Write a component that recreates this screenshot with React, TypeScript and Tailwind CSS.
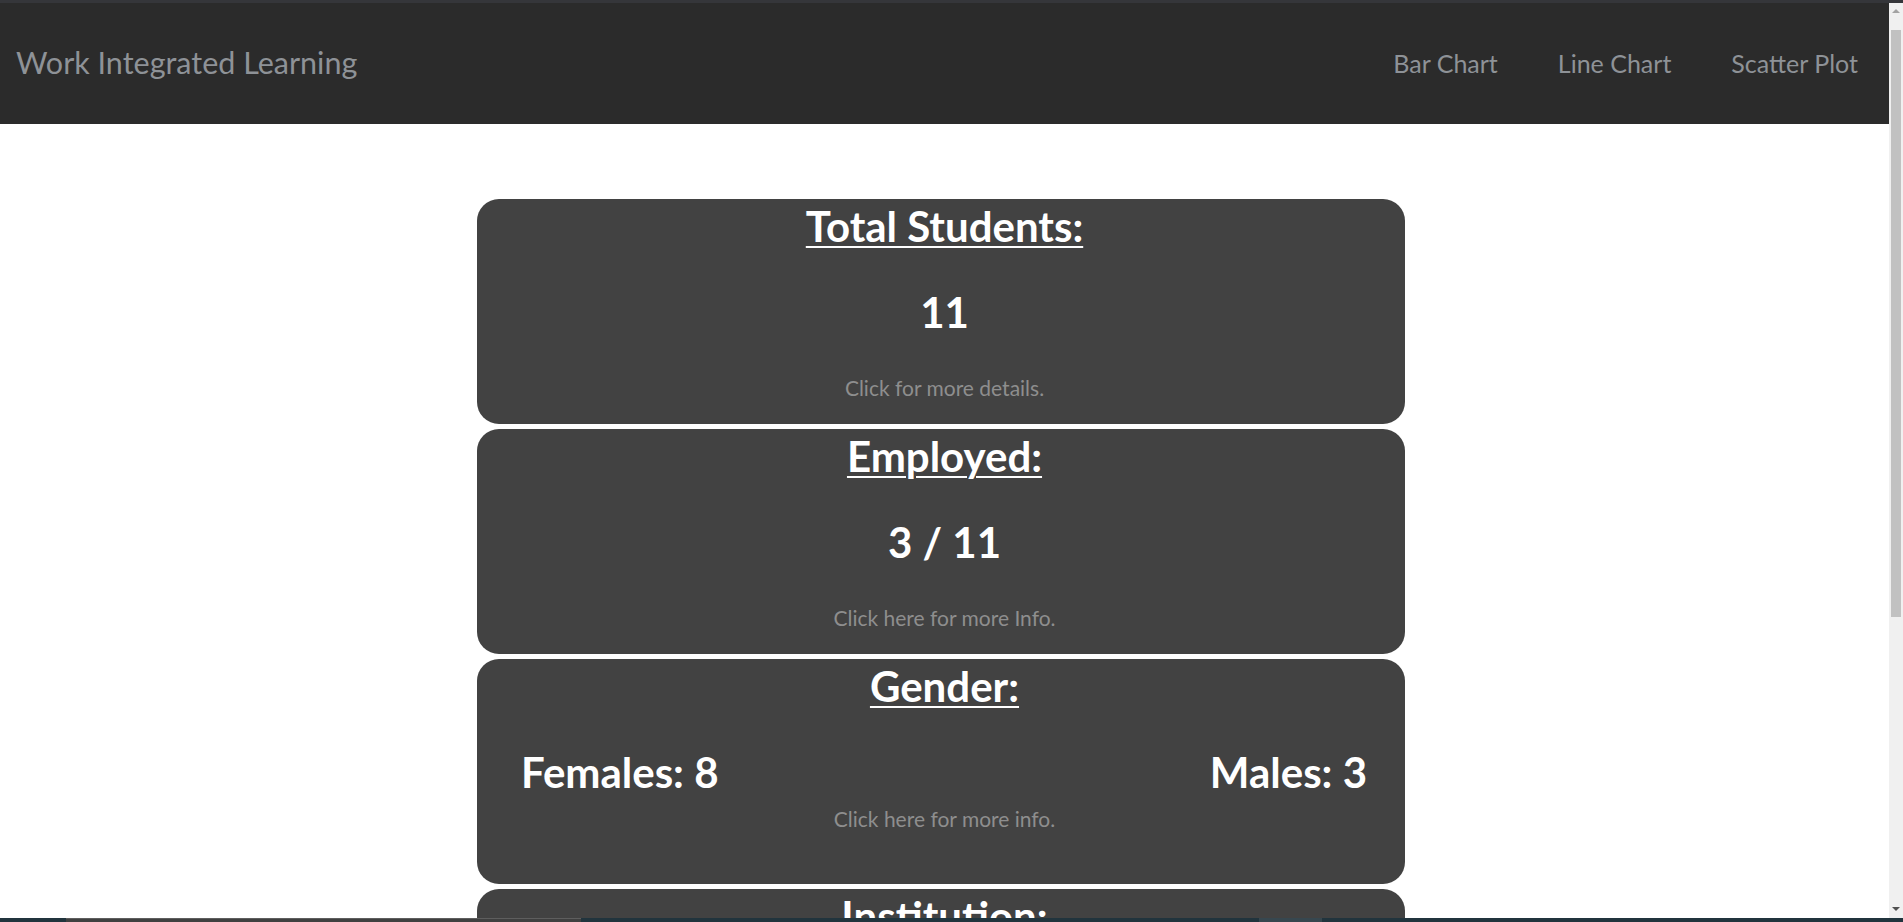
import React from 'react';

const links = ['Bar Chart', 'Line Chart', 'Scatter Plot'];

function StatCard({ title, value, note }: { title: string; value: string; note: string }) {
  return (
    <div className="h-[225px] shrink-0 rounded-[22px] bg-[#424242] pt-[2px] pl-[7px] flex flex-col items-center text-center">
      <h2 className="text-[42px] leading-[1.2] font-bold text-white underline decoration-2 underline-offset-[4px]">{title}</h2>
      <div className="mt-[36px] text-[42px] leading-[1.2] font-bold text-white">{value}</div>
      <p className="mt-[37px] text-[21px] leading-[1.2] text-[#8e8e8e]">{note}</p>
    </div>
  );
}

function GenderCard() {
  return (
    <div className="h-[225px] shrink-0 rounded-[22px] bg-[#424242] pt-[2px] pl-[7px] flex flex-col text-center">
      <h2 className="self-center text-[42px] leading-[1.2] font-bold text-white underline decoration-2 underline-offset-[4px]">Gender:</h2>
      <div className="mt-[36px] flex justify-between pl-[37px] pr-[38px] text-[42px] leading-[1.2] font-bold text-white">
        <span>Females: 8</span>
        <span>Males: 3</span>
      </div>
      <p className="mt-[8px] text-[21px] leading-[1.2] text-[#8e8e8e]">Click here for more info.</p>
    </div>
  );
}

function Scrollbar() {
  return (
    <div className="w-[14px] shrink-0 bg-[#f0f0f0] flex flex-col items-center">
      <div className="h-[27px] flex items-start pt-[6px]">
        <div className="w-0 h-0 border-x-[4px] border-x-transparent border-b-[4px] border-b-[#a3a3a3]" />
      </div>
      <div className="w-[10px] h-[587px] bg-[#c1c1c1]" />
      <div className="flex-1" />
      <div className="h-[14px] flex items-start pt-[3px]">
        <div className="w-0 h-0 border-x-[4px] border-x-transparent border-t-[4px] border-t-[#505050]" />
      </div>
    </div>
  );
}

export default function App() {
  return (
    <div className="h-[922px] overflow-hidden flex flex-col bg-white font-['Lato',sans-serif]">
      {/* window top edge */}
      <div className="h-[3px] shrink-0 bg-[#35363a]" />

      <div className="flex flex-1 min-h-0">
        <div className="flex-1 min-w-0 overflow-hidden">
          {/* Navbar */}
          <nav className="h-[121px] bg-[#2b2b2b] flex items-center justify-between pl-[16px] pr-[1px]">
            <a className="mb-[3px] text-[30.5px] leading-[1.2] text-[#8e9297] whitespace-nowrap">Work Integrated Learning</a>
            <ul className="flex">
              {links.map((l) => (
                <li key={l}>
                  <a className="px-[30px] text-[25px] leading-[1.2] text-[#8e9297] whitespace-nowrap">{l}</a>
                </li>
              ))}
            </ul>
          </nav>

          {/* Cards */}
          <div className="flex justify-center pr-[7px] pt-[75px]">
            <main className="w-[928px] flex flex-col gap-[5px]">
              <StatCard title="Total Students:" value="11" note="Click for more details." />
              <StatCard title="Employed:" value="3 / 11" note="Click here for more Info." />
              <GenderCard />
              <StatCard title="Institution:" value="" note="Click here for more info." />
            </main>
          </div>
        </div>
        <Scrollbar />
      </div>

      {/* taskbar edge */}
      <div className="h-[4px] shrink-0 bg-[#21343d] flex">
        <div className="w-[66px]" />
        <div className="w-[515px] bg-[#404040] border-t border-[#5e5e5e]" />
        <div className="w-[678px]" />
        <div className="w-[63px] bg-[#37474f]" />
      </div>
    </div>
  );
}
